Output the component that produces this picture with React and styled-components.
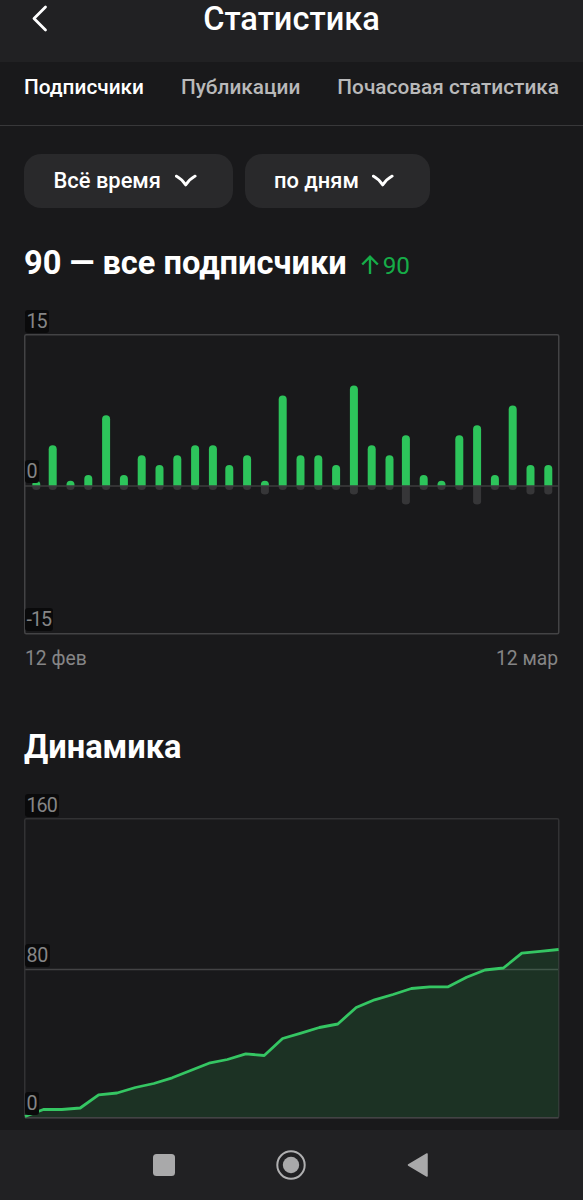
import React from "react";
import styled, { createGlobalStyle } from "styled-components";

const palette = {
    page: "#19191b",
    bar: "#212123",
    chip: "#29292b",
    line: "#434345",
    grid: "#323234",
    green: "#2dc45b",
    delta: "#16ad48",
    muted: "#858586",
};

const GlobalStyle = createGlobalStyle`
    body {
        margin: 0;
        background: ${palette.page};
        color: #fff;
        font-family: Roboto, "Liberation Sans", sans-serif;
    }
`;

const Screen = styled.div`
    display: flex;
    flex-direction: column;
    width: 583px;
    height: 1200px;
    overflow: hidden;
`;

const Header = styled.header`
    display: grid;
    grid-template-columns: 80px 1fr 80px;
    flex: none;
    height: 62px;
    background: ${palette.bar};
`;

const BackButton = styled.button`
    display: flex;
    align-items: flex-start;
    padding: 4px 0 0 30px;
    border: 0;
    background: none;
`;

const Title = styled.h1`
    margin: 0;
    font-size: 32.6px;
    font-weight: 500;
    line-height: 38px;
    text-align: center;
`;

const Tabs = styled.nav`
    display: flex;
    justify-content: space-between;
    flex: none;
    box-sizing: border-box;
    height: 64px;
    padding: 12px 24px 0;
    border-bottom: 1px solid #38383a;
`;

const Tab = styled.a`
    color: ${({ $active }) => ($active ? "#fff" : "#b9b9ba")};
    font-size: 20.8px;
    font-weight: 500;
    line-height: 26px;
    white-space: nowrap;
`;

const Content = styled.main`
    display: flex;
    flex-direction: column;
    flex: 1;
    min-height: 0;
    padding: 28px 24px 0;
`;

const Filters = styled.div`
    display: flex;
    gap: 12px;
`;

const Filter = styled.button`
    display: flex;
    align-items: center;
    justify-content: space-between;
    box-sizing: border-box;
    width: ${({ $width }) => $width}px;
    height: 54px;
    padding: 0 36px 1px 29.5px;
    border: 0;
    border-radius: 17px;
    background: ${palette.chip};
    color: #fff;
    font: 500 21.9px/26px Roboto, "Liberation Sans", sans-serif;
    white-space: nowrap;
`;

const Heading = styled.h2`
    display: flex;
    align-items: baseline;
    margin: ${({ $top }) => $top}px 0 0;
    font-size: 32.6px;
    font-weight: 700;
    line-height: 40px;
    white-space: nowrap;
`;

const Delta = styled.span`
    display: flex;
    align-items: baseline;
    gap: 4px;
    margin-left: 14px;
    color: ${palette.delta};
    font-size: 24.3px;
    font-weight: 400;
`;

const Chart = styled.div`
    position: relative;
    width: 535px;
    height: 301px;
    margin-top: ${({ $top }) => $top}px;
`;

const Plot = styled.svg`
    display: block;
    overflow: visible;
`;

const AxisLabel = styled.span`
    position: absolute;
    left: 1px;
    top: ${({ $top }) => $top}px;
    box-sizing: border-box;
    height: 23px;
    padding: 0 2px 0 1.5px;
    border-radius: 3px;
    background: #0a0a0b;
    color: ${palette.muted};
    font-size: 19.7px;
    letter-spacing: ${({ $tight }) => ($tight ? -1 : -0.2)}px;
    line-height: 24px;
`;

const Dates = styled.div`
    display: flex;
    justify-content: space-between;
    margin-top: 12px;
    padding: 0 1px;
    color: ${palette.muted};
    font-size: 19.3px;
    line-height: 24px;
`;

const SystemBar = styled.footer`
    display: grid;
    grid-template-columns: repeat(3, 127px);
    justify-content: center;
    align-items: center;
    justify-items: center;
    flex: none;
    height: 70px;
    padding-right: 1px;
    background: ${palette.bar};
`;

const joined = [0, 4, 0, 1, 7, 1, 3, 2, 3, 4, 4, 2, 3, 0, 9, 3, 3, 2, 10, 4, 3, 5, 1, 0, 5, 6, 1, 8, 2, 2];
const left = { 13: 1, 18: 1, 21: 2, 25: 2, 28: 1, 29: 1 };

// heights over the bottom edge of the plot
const growth = [
    1, 8, 8, 9.5, 22.7, 24.5, 30, 34, 39.7, 47, 54.3, 58, 63.7, 62, 79,
    84.3, 90, 93.5, 110, 117.7, 123, 129, 130.7, 130.7, 140.3, 147.5, 149.5, 164.3, 166.2, 168,
];

const BASE = 152;

const barX = (i) => 12.3 + 17.8 * i - 1.4 * Math.floor((i + 9) / 10);

const columnUp = (x, h) =>
    `M${x - 4} ${BASE}v${-(h - 4)}q0 -4 4 -4t4 4v${h - 4}z`;

const columnDown = (x, h) =>
    `M${x - 4} ${BASE}v${h - 3}q0 3 4 3t4 -3v${-(h - 3)}z`;

const Chevron = () => (
    <svg width="22" height="14" viewBox="0 0 22 14" fill="none" stroke="#fff" strokeWidth="2.8" strokeLinecap="round" strokeLinejoin="round">
        <path d="M1.2 2.1C4.800 4 7.800 6.800 10.700 10.900C13.600 6.800 16.600 4 20.200 2.100" />
    </svg>
);

const BarChart = () => (
    <Chart $top={48}>
        <Plot width="535" height="301">
            {joined.map((n, i) => (
                <g key={i}>
                    <path d={columnUp(barX(i), n ? n * 9.95 + 1 : 5.3)} fill={palette.green} />
                    <path d={columnDown(barX(i), left[i] ? left[i] * 10 - 1.5 : 4)} fill="#363638" />
                </g>
            ))}
            <path d="M1 152H534.500" stroke="#3c3c3e" strokeWidth="1.500" />
            <rect x="0.750" y="0.750" width="534" height="299" rx="1.500" fill="none" stroke={palette.line} strokeWidth="1.500" />
        </Plot>
        <AxisLabel $top={-24} $tight>15</AxisLabel>
        <AxisLabel $top={126}>0</AxisLabel>
        <AxisLabel $top={274} $tight>-15</AxisLabel>
    </Chart>
);

const GrowthChart = () => {
    const line = growth.map((h, i) => `${(1 + i * 18.4).toFixed(1)},${299.5 - h}`).join(" ");

    return (
        <Chart $top={51}>
            <Plot width="535" height="301">
                <path d="M1 151.500H534.500" stroke={palette.line} strokeWidth="1.500" />
                <rect x="0.750" y="0.750" width="534" height="299" rx="1.500" fill="none" stroke={palette.grid} strokeWidth="1.500" />
                <path d="M1 299.750H534.500" stroke={palette.line} strokeWidth="1.500" />
                <polygon points={`1,299 ${line} 534.5,299`} fill={palette.green} fillOpacity="0.150" />
                <polyline points={line} fill="none" stroke="#35c663" strokeWidth="2.800" strokeLinejoin="round" />
            </Plot>
            <AxisLabel $top={-24} $tight>160</AxisLabel>
            <AxisLabel $top={126}>80</AxisLabel>
            <AxisLabel $top={274}>0</AxisLabel>
        </Chart>
    );
};

const App = () => (
    <Screen>
        <GlobalStyle />
        <Header>
            <BackButton aria-label="Назад">
                <svg width="20" height="29" viewBox="0 0 20 29" fill="none" stroke="#fff" strokeWidth="2.800" strokeLinecap="round" strokeLinejoin="round">
                    <path d="M15.500 3L4 14.500L15.500 26" />
                </svg>
            </BackButton>
            <Title>Статистика</Title>
        </Header>
        <Tabs>
            <Tab $active>Подписчики</Tab>
            <Tab>Публикации</Tab>
            <Tab>Почасовая статистика</Tab>
        </Tabs>
        <Content>
            <Filters>
                <Filter $width={208.5}>
                    Всё время
                    <Chevron />
                </Filter>
                <Filter $width={185.5}>
                    по дням
                    <Chevron />
                </Filter>
            </Filters>
            <Heading $top={35}>
                90 — все подписчики
                <Delta>
                    <svg width="18" height="19" viewBox="0 0 18 19" fill="none" stroke="currentColor" strokeWidth="2.400">
                        <path d="M9 19V2M1.200 9.500L9 1.700L16.800 9.500" />
                    </svg>
                    90
                </Delta>
            </Heading>
            <BarChart />
            <Dates>
                <span>12 фев</span>
                <span>12 мар</span>
            </Dates>
            <Heading $top={56}>Динамика</Heading>
            <GrowthChart />
        </Content>
        <SystemBar>
            <svg width="22" height="22">
                <rect width="22" height="22" rx="3.500" fill="#a9a9aa" />
            </svg>
            <svg width="30" height="30">
                <circle cx="15" cy="15" r="13.700" fill="none" stroke="#b0b0b1" strokeWidth="2" />
                <circle cx="15" cy="15" r="8.200" fill="#a9a9aa" />
            </svg>
            <svg width="22" height="26">
                <path d="M1.500 13L20 2V24z" fill="#a9a9aa" stroke="#a9a9aa" strokeWidth="1.500" strokeLinejoin="round" />
            </svg>
        </SystemBar>
    </Screen>
);

export default App;
